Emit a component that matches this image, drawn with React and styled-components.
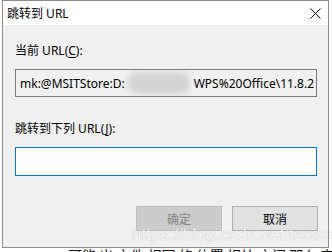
import styled, { createGlobalStyle } from "styled-components"

const GlobalStyle = createGlobalStyle`
  html, body {
    margin: 0;
    padding: 0;
    background: #ffffff;
    overflow: hidden;
  }
  body {
    width: 332px;
    height: 252px;
    font-family: "Noto Sans", "Noto Sans CJK SC", sans-serif;
  }
`

const Page = styled.div`
  position: relative;
  width: 332px;
  height: 252px;
  overflow: hidden;
`

const Window = styled.div`
  margin-left: 2px;
  width: 327px;
  height: 248px;
  box-sizing: border-box;
  border: 1px solid #8c8c8c;
  display: flex;
  flex-direction: column;
  background: #f0f0f0;
`

const TitleBar = styled.div`
  height: 24px;
  background: #ffffff;
  display: flex;
  align-items: center;
  justify-content: space-between;
  padding: 0 7px 0 4px;
  font-size: 12px;
  color: #000;
`

const Title = styled.span`
  line-height: 16px;
  margin-top: 1px;
`

const Close = styled.svg`
  width: 11px;
  height: 11px;
  margin-top: 1px;
`

const Body = styled.div`
  flex: 1;
  display: flex;
  flex-direction: column;
  padding: 0 11px 0 12px;
`

const Label = styled.div`
  font-size: 12px;
  line-height: 16px;
  color: #000;
  margin-top: ${p => p.$top}px;

  u {
    text-decoration: underline;
    text-underline-offset: 2px;
  }
`

const Field = styled.div`
  margin-top: 10px;
  height: ${p => p.$h}px;
  box-sizing: border-box;
  border: 1px solid ${p => (p.$focus ? "#0078d7" : "#7a7a7a")};
  background: ${p => (p.$focus ? "#ffffff" : "#f0f0f0")};
  display: flex;
  align-items: center;
  padding-left: 4px;
  overflow: hidden;
  white-space: nowrap;
  font-size: 12px;
  color: #000;
`

const Blur = styled.span`
  display: inline-block;
  width: 62px;
  height: 22px;
  margin: 0 4px 0 3px;
  border-radius: 10px;
  background: #d2d2d2;
  filter: blur(3px);
  flex: none;
`

const Buttons = styled.div`
  margin-top: 30px;
  display: flex;
  justify-content: flex-end;
  gap: 10px;
  margin-right: -1px;
`

const Button = styled.button`
  width: 86px;
  height: 25px;
  box-sizing: border-box;
  padding: 0;
  font-family: inherit;
  font-size: 12px;
  border: 1px solid ${p => (p.disabled ? "#bfbfbf" : "#adadad")};
  background: ${p => (p.disabled ? "#cccccc" : "#e1e1e1")};
  color: ${p => (p.disabled ? "#838383" : "#000000")};
`

const Watermark = styled.div`
  position: absolute;
  left: 132px;
  top: 225px;
  font-family: "Liberation Sans", Arial, sans-serif;
  font-size: 17px;
  color: rgba(255, 255, 255, 0.85);
  text-shadow: 0 0 1px rgba(0, 0, 0, 0.25);
  white-space: nowrap;
`

const Behind = styled.div`
  padding-left: 68px;
  font-size: 14px;
  line-height: 14px;
  color: #111;
  white-space: nowrap;
  font-family: "Noto Sans CJK SC", sans-serif;
`

const App = () => {
  return (
    <Page>
      <GlobalStyle />
      <Window>
        <TitleBar>
          <Title>跳转到 URL</Title>
          <Close viewBox="0 0 11 11">
            <path d="M0.5 0.5 L10.5 10.5 M10.5 0.5 L0.5 10.5" stroke="#000" strokeWidth="1" fill="none" />
          </Close>
        </TitleBar>
        <Body>
          <Label $top={18}>
            当前 URL(<u>C</u>):
          </Label>
          <Field $h={28}>
            mk:@MSITStore:D:
            <Blur />
            WPS%20Office\11.8.2
          </Field>
          <Label $top={24}>
            跳转到下列 URL(<u>J</u>):
          </Label>
          <Field $h={29} $focus />
          <Buttons>
            <Button disabled>确定</Button>
            <Button>取消</Button>
          </Buttons>
        </Body>
      </Window>
      <Behind>可能 出 文件 相同 的 位置 相处 之间 那么 它的 所有 使用</Behind>
      <Watermark>https://blog.csdn.net/tscaxx</Watermark>
    </Page>
  )
}

export default App
